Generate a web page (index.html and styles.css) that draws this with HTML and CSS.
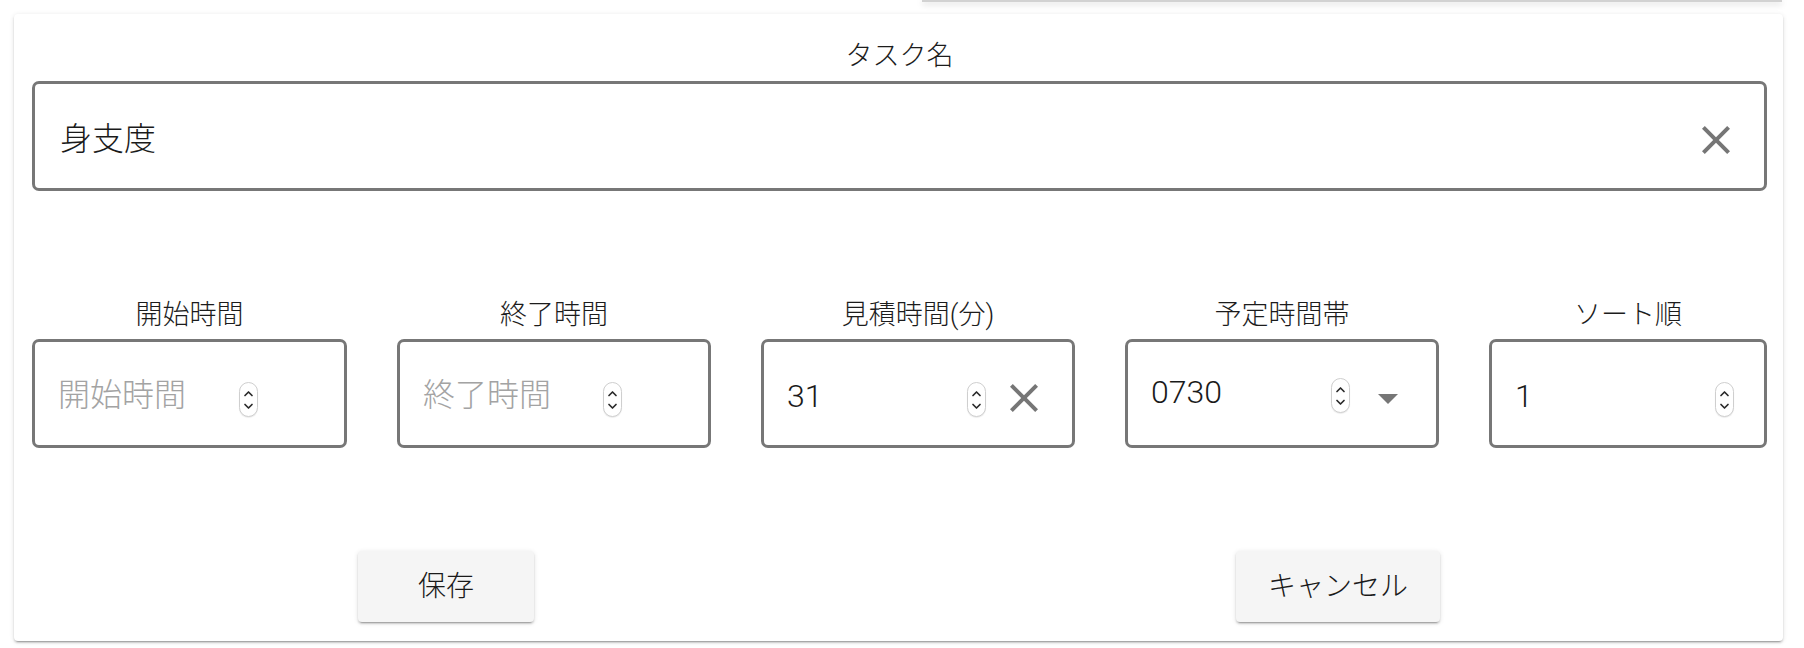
FILE: index.html
```html
<!DOCTYPE html>
<html lang="ja">
<head>
<meta charset="utf-8">
<title>タスク編集</title>
<link rel="stylesheet" href="styles.css">
</head>
<body>
<div class="top-shadow"></div>
<div class="card">
  <div class="label label-top">タスク名</div>
  <div class="field field-wide">
    <span class="value">身支度</span>
    <span class="icon"><svg viewBox="0 0 24 24" width="48" height="48"><path d="M19,6.41L17.59,5L12,10.59L6.41,5L5,6.41L10.59,12L5,17.59L6.41,19L12,13.41L17.59,19L19,17.59L13.41,12L19,6.41Z"/></svg></span>
  </div>

  <div class="row">
    <div class="col">
      <div class="label">開始時間</div>
      <div class="field">
        <span class="value placeholder">開始時間</span>
        <span class="spin"><svg viewBox="0 0 19 35" width="19" height="35"><path d="M6 13.5L9.5 10L13 13.5M6 22.5L9.5 26L13 22.5"/></svg></span>
        <span class="icon"></span>
      </div>
    </div>
    <div class="col">
      <div class="label">終了時間</div>
      <div class="field">
        <span class="value placeholder">終了時間</span>
        <span class="spin"><svg viewBox="0 0 19 35" width="19" height="35"><path d="M6 13.5L9.5 10L13 13.5M6 22.5L9.5 26L13 22.5"/></svg></span>
        <span class="icon"></span>
      </div>
    </div>
    <div class="col">
      <div class="label">見積時間(分)</div>
      <div class="field">
        <span class="value">31</span>
        <span class="spin"><svg viewBox="0 0 19 35" width="19" height="35"><path d="M6 13.5L9.5 10L13 13.5M6 22.5L9.5 26L13 22.5"/></svg></span>
        <span class="icon"><svg viewBox="0 0 24 24" width="48" height="48"><path d="M19,6.41L17.59,5L12,10.59L6.41,5L5,6.41L10.59,12L5,17.59L6.41,19L12,13.41L17.59,19L19,17.59L13.41,12L19,6.41Z"/></svg></span>
      </div>
    </div>
    <div class="col">
      <div class="label">予定時間帯</div>
      <div class="field field-select">
        <span class="value raised">0730</span>
        <span class="spin raised"><svg viewBox="0 0 19 35" width="19" height="35"><path d="M6 13.5L9.5 10L13 13.5M6 22.5L9.5 26L13 22.5"/></svg></span>
        <span class="icon"><svg viewBox="0 0 24 24" width="48" height="48"><path d="M7,10L12,15L17,10H7Z"/></svg></span>
      </div>
    </div>
    <div class="col">
      <div class="label">ソート順</div>
      <div class="field field-plain">
        <span class="value">1</span>
        <span class="spin"><svg viewBox="0 0 19 35" width="19" height="35"><path d="M6 13.5L9.5 10L13 13.5M6 22.5L9.5 26L13 22.5"/></svg></span>
      </div>
    </div>
  </div>

  <div class="actions">
    <div class="action-cell"><button class="btn btn-save">保存</button></div>
    <div class="action-cell"><button class="btn">キャンセル</button></div>
  </div>
</div>
</body>
</html>
```

FILE: styles.css
```css
html, body {
  margin: 0;
  padding: 0;
  background: #ffffff;
}
body {
  width: 1804px;
  height: 648px;
  overflow: hidden;
  font-family: Roboto, "Noto Sans CJK JP", sans-serif;
  font-weight: 300;
  color: #212121;
}
.top-shadow {
  margin-left: 922px;
  width: 860px;
  height: 2px;
  background: #d2d2d2;
  box-shadow: 0 2px 6px rgba(0, 0, 0, 0.22);
}
.card {
  margin: 12px 0 0 14px;
  width: 1769px;
  box-sizing: border-box;
  padding: 22px 16px 19px 18px;
  background: #fff;
  border-radius: 4px;
  box-shadow: 0 3px 1px -2px rgba(0,0,0,.2), 0 2px 2px 0 rgba(0,0,0,.14), 0 1px 5px 0 rgba(0,0,0,.12);
}
.label {
  font-size: 27px;
  line-height: 36px;
  text-align: center;
  color: #1c1c1c;
  margin-bottom: 9px;
  white-space: nowrap;
}
.label-top {
  padding-top: 2px;
  margin-bottom: 7px;
}
.field {
  box-sizing: border-box;
  height: 109px;
  border: 3px solid #777;
  border-radius: 7px;
  display: flex;
  align-items: center;
  padding: 0 24px 0 23px;
  font-size: 32px;
  line-height: 40px;
}
.field-wide {
  height: 110px;
  padding-left: 25px;
  padding-top: 2px;
}
.value {
  flex: 1;
  white-space: nowrap;
  color: #1a1a1a;
  padding-top: 4px;
}
.placeholder {
  color: #a3a3a3;
  padding-top: 2px;
}
.raised {
  position: relative;
  top: -4px;
}
.spin {
  width: 19px;
  height: 35px;
  box-sizing: border-box;
  border: 1px solid #cfcfcf;
  border-radius: 10px;
  background: #fff;
  box-shadow: 0 1px 1px rgba(0,0,0,.08);
  display: flex;
  align-items: center;
  justify-content: center;
  margin-top: 11px;
  margin-right: 14px;
}
.spin svg {
  display: block;
  margin: -1px;
}
.spin svg path {
  fill: none;
  stroke: #2a2a2a;
  stroke-width: 1.7;
  stroke-linecap: round;
  stroke-linejoin: round;
}
.spin.raised {
  top: 0;
  margin-top: 3px;
}
.icon {
  width: 48px;
  height: 48px;
  flex: none;
  margin-top: 8px;
}
.field-wide .icon {
  margin-top: 6px;
}
.icon svg {
  display: block;
  fill: #767676;
}
.field-plain {
  padding-right: 30px;
}
.field-plain .spin {
  margin-right: 0;
}
.row {
  margin-top: 106px;
  display: grid;
  grid-template-columns: 315px 314px 314px 314px 1fr;
  column-gap: 50px;
}
.row .label {
  margin-bottom: 6px;
}
.actions {
  margin-top: 103px;
  margin-left: -32px;
  width: 1784px;
  display: grid;
  grid-template-columns: 1fr 1fr;
}
.action-cell {
  display: flex;
  justify-content: center;
}
.btn {
  height: 71px;
  min-width: 176px;
  padding: 0 32px 5px;
  border: none;
  border-radius: 4px;
  background: #f5f5f5;
  font-family: Roboto, "Noto Sans CJK JP", sans-serif;
  font-weight: 300;
  font-size: 28px;
  color: #1a1a1a;
  box-shadow: 0 3px 1px -2px rgba(0,0,0,.2), 0 2px 2px 0 rgba(0,0,0,.14), 0 1px 5px 0 rgba(0,0,0,.12);
}
```
